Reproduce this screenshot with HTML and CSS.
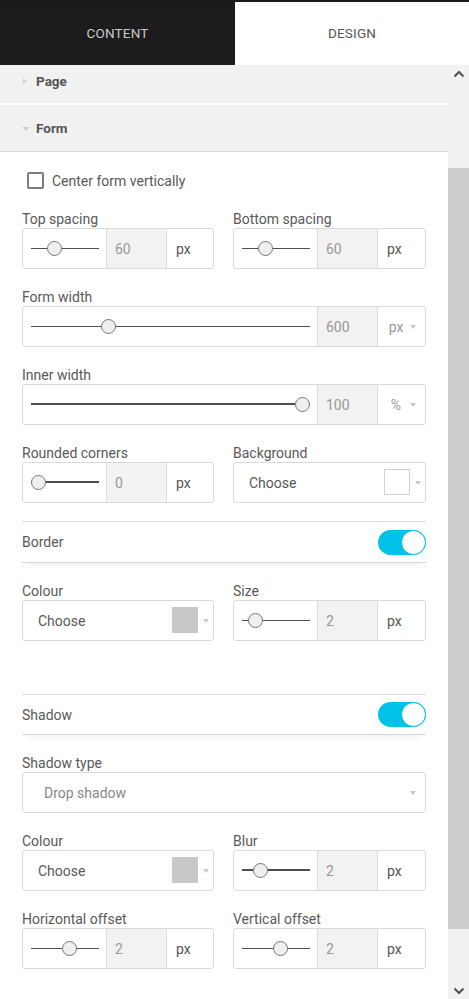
FILE: index.html
```html
<!DOCTYPE html>
<html>
<head>
<meta charset="utf-8">
<title>Design panel</title>
<link rel="stylesheet" href="styles.css">
</head>
<body>
<div class="app">
  <div class="tabs">
    <div class="tab tab-dark">CONTENT</div>
    <div class="tab tab-active">DESIGN</div>
  </div>
  <div class="main">
    <div class="panel">
      <div class="acc-head acc-page"><span class="tri tri-right"></span><span>Page</span></div>
      <div class="acc-head acc-form"><span class="tri tri-down"></span><span>Form</span></div>
      <div class="form-body">
        <label class="check-row"><span class="checkbox"></span><span class="check-text">Center form vertically</span></label>

        <div class="row2 first-row">
          <div class="field">
            <div class="label">Top spacing</div>
            <div class="ctrl">
              <div class="slider"><div class="track"><span class="knob" style="--p:0.3"></span></div></div>
              <div class="num">60</div>
              <div class="unit">px</div>
            </div>
          </div>
          <div class="field">
            <div class="label">Bottom spacing</div>
            <div class="ctrl">
              <div class="slider"><div class="track"><span class="knob" style="--p:0.3"></span></div></div>
              <div class="num">60</div>
              <div class="unit">px</div>
            </div>
          </div>
        </div>

        <div class="field">
          <div class="label">Form width</div>
          <div class="ctrl ctrl-wide">
            <div class="slider"><div class="track"><span class="knob" style="--p:0.264"></span></div></div>
            <div class="num">600</div>
            <div class="unit unit-sel"><span class="unit-text">px</span><span class="caret"></span></div>
          </div>
        </div>

        <div class="field">
          <div class="label">Inner width</div>
          <div class="ctrl ctrl-wide">
            <div class="slider"><div class="track thick"><span class="knob" style="--p:1"></span></div></div>
            <div class="num">100</div>
            <div class="unit unit-sel"><span class="unit-text">%</span><span class="caret"></span></div>
          </div>
        </div>

        <div class="row2">
          <div class="field field-tight">
            <div class="label">Rounded corners</div>
            <div class="ctrl">
              <div class="slider"><div class="track thick"><span class="knob" style="--p:0"></span></div></div>
              <div class="num">0</div>
              <div class="unit">px</div>
            </div>
          </div>
          <div class="field field-tight">
            <div class="label">Background</div>
            <div class="select">
              <span class="select-text">Choose</span>
              <span class="swatch swatch-white"></span>
              <span class="caret"></span>
            </div>
          </div>
        </div>

        <div class="section">
          <span>Border</span>
          <span class="toggle"><span class="toggle-knob"></span></span>
        </div>

        <div class="row2">
          <div class="field">
            <div class="label">Colour</div>
            <div class="select">
              <span class="select-text">Choose</span>
              <span class="swatch swatch-gray"></span>
              <span class="caret"></span>
            </div>
          </div>
          <div class="field">
            <div class="label">Size</div>
            <div class="ctrl">
              <div class="slider"><div class="track"><span class="knob" style="--p:0.115"></span></div></div>
              <div class="num">2</div>
              <div class="unit">px</div>
            </div>
          </div>
        </div>

        <div class="section section-gap">
          <span>Shadow</span>
          <span class="toggle"><span class="toggle-knob"></span></span>
        </div>

        <div class="field">
          <div class="label">Shadow type</div>
          <div class="select select-wide">
            <span class="select-text muted">Drop shadow</span>
            <span class="caret"></span>
          </div>
        </div>

        <div class="row2">
          <div class="field">
            <div class="label">Colour</div>
            <div class="select">
              <span class="select-text">Choose</span>
              <span class="swatch swatch-gray"></span>
              <span class="caret"></span>
            </div>
          </div>
          <div class="field">
            <div class="label">Blur</div>
            <div class="ctrl">
              <div class="slider"><div class="track thick"><span class="knob" style="--p:0.2"></span></div></div>
              <div class="num">2</div>
              <div class="unit">px</div>
            </div>
          </div>
        </div>

        <div class="row2">
          <div class="field">
            <div class="label">Horizontal offset</div>
            <div class="ctrl">
              <div class="slider"><div class="track"><span class="knob" style="--p:0.59"></span></div></div>
              <div class="num">2</div>
              <div class="unit">px</div>
            </div>
          </div>
          <div class="field">
            <div class="label">Vertical offset</div>
            <div class="ctrl">
              <div class="slider"><div class="track"><span class="knob" style="--p:0.59"></span></div></div>
              <div class="num">2</div>
              <div class="unit">px</div>
            </div>
          </div>
        </div>
      </div>
    </div>
    <div class="scrollbar">
      <div class="sb-btn">
        <svg width="12" height="8" viewBox="0 0 12 8"><path d="M1.5 6.5 L6 2 L10.5 6.5" fill="none" stroke="#505050" stroke-width="2"/></svg>
      </div>
      <div class="sb-track"><div class="sb-thumb"></div></div>
      <div class="sb-btn">
        <svg width="12" height="8" viewBox="0 0 12 8"><path d="M1.5 1.5 L6 6 L10.5 1.5" fill="none" stroke="#505050" stroke-width="2"/></svg>
      </div>
    </div>
  </div>
</div>
</body>
</html>
```

FILE: styles.css
```css
* { box-sizing: border-box; margin: 0; padding: 0; }

body {
  margin: 0;
  width: 469px;
  height: 999px;
  overflow: hidden;
  font-family: Roboto, "Liberation Sans", Arial, sans-serif;
  font-size: 14px;
  color: #595959;
  background: #fff;
}

.app { display: flex; flex-direction: column; height: 999px; }

/* Tabs */
.tabs { display: flex; height: 65px; flex: 0 0 auto; border-top: 2px solid #1b1b1b; }
.tab { display: flex; align-items: center; justify-content: center; font-size: 13.5px; letter-spacing: 0.2px; padding-bottom: 1px; }
.tab-dark { width: 235px; background: #1c1c1c; color: #c9c9c9; }
.tab-active { flex: 1; background: #fff; color: #555; }

.main { display: flex; flex: 1; min-height: 0; }
.panel { flex: 1; overflow: hidden; }

/* Scrollbar */
.scrollbar { width: 21px; flex: 0 0 21px; background: #f1f1f1; display: flex; flex-direction: column; }
.sb-btn { height: 17px; flex: 0 0 17px; display: flex; align-items: center; justify-content: center; }
.sb-track { flex: 1; padding-top: 86px; }
.sb-thumb { height: 761px; background: #cdcdcd; }

/* Accordion heads */
.acc-head { display: flex; align-items: center; background: #f1f1f1; font-weight: 700; font-size: 13.5px; color: #555; }
.acc-page { height: 38px; padding: 0 0 6px 23px; }
.acc-form { height: 47px; margin-top: 2px; padding-left: 22px; border-bottom: 1px solid #dcdcdc; }
.tri { width: 0; height: 0; }
.tri-right { border-left: 4px solid #d2d2d2; border-top: 3.5px solid transparent; border-bottom: 3.5px solid transparent; margin-right: 9px; }
.tri-down { border-top: 4px solid #d2d2d2; border-left: 4px solid transparent; border-right: 4px solid transparent; margin-right: 6px; margin-top: 1px; }

/* Form body */
.form-body { padding: 20px 22px 0; }

.check-row { display: flex; align-items: center; height: 17px; }
.checkbox { width: 17px; height: 17px; margin-left: 5px; border: 2px solid #7c7b8c; border-radius: 2px; background: #fff; }
.check-text { margin-left: 8px; }

.row2 { display: grid; grid-template-columns: 192px 193px; column-gap: 19px; }
.first-row { margin-top: 23px; }

.field { margin-bottom: 21px; }
.field-tight { margin-bottom: 18px; }
.label { height: 16px; line-height: 15px; white-space: nowrap; }

.ctrl { display: flex; height: 41px; border: 1px solid #d9d9d9; border-radius: 3px; }
.slider { flex: 0 0 83px; padding: 0 7px 0 8px; display: flex; align-items: center; }
.ctrl-wide .slider { flex: 1; }
.track { position: relative; flex: 1; height: 15px; }
.track::before { content: ""; position: absolute; left: 0; right: 0; top: 7px; height: 1px; background: #4e4e4e; }
.track.thick::before { top: 6px; height: 2px; }
.knob {
  position: absolute; top: 0;
  left: calc((100% - 15px) * var(--p));
  width: 15px; height: 15px; border-radius: 50%;
  background: #efefef; border: 1px solid #777;
}

.num { flex: 0 0 61px; display: flex; align-items: center; padding-left: 8px; background: #f2f2f2; border-left: 1px solid #ddd; border-right: 1px solid #ddd; color: #999; }
.unit { flex: 1; display: flex; align-items: center; padding-left: 9px; color: #555; }
.ctrl-wide .unit { flex: 0 0 47px; }
.unit-sel { padding-left: 10px; color: #999; }
.unit-text { width: 16px; text-align: center; }
.unit-sel .caret { margin-left: auto; margin-right: 9px; }

.caret { width: 0; height: 0; border-left: 3.5px solid transparent; border-right: 3.5px solid transparent; border-top: 4px solid #c8c8c8; }

/* Selects */
.select { display: flex; align-items: center; height: 41px; border: 1px solid #d9d9d9; border-radius: 3px; padding: 0 4px 0 15px; }
.select-text { flex: 1; }
.select-wide { padding: 0 9px 0 21px; }
.muted { color: #888; }
.swatch { width: 26px; height: 26px; margin-right: 5px; margin-top: -2px; }
.swatch-white { background: #fff; border: 1px solid #d0d0d0; }
.swatch-gray { background: #c8c8c8; }

/* Sections with toggles */
.section {
  display: flex; align-items: center; justify-content: space-between;
  height: 42px; margin-bottom: 21px;
  border-top: 1px solid #dcdcdc; border-bottom: 1px solid #d6d6d6;
  box-shadow: 0 7px 6px -5px rgba(0, 0, 0, 0.07);
}
.section-gap { margin-top: 32px; height: 41px; }

.toggle { display: flex; justify-content: flex-end; width: 48px; height: 25px; border-radius: 13px; background: #00c2e8; }
.toggle-knob { width: 25px; height: 25px; border-radius: 50%; background: #fff; border: 1px solid #00c2e8; }
```
